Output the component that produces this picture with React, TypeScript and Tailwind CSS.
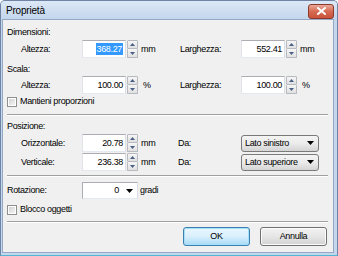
import React from "react";

function Up() {
  return (
    <svg width="5" height="3" viewBox="0 0 5 3">
      <path d="M0 3 L2.5 0 L5 3 Z" fill="#4a5f84" />
    </svg>
  );
}
function Down() {
  return (
    <svg width="5" height="3" viewBox="0 0 5 3">
      <path d="M0 0 L5 0 L2.5 3 Z" fill="#4a5f84" />
    </svg>
  );
}
function Caret() {
  return (
    <svg width="7" height="4" viewBox="0 0 7 4">
      <path d="M0 0 L7 0 L3.5 4 Z" fill="#000" />
    </svg>
  );
}

function NumField({ value, selected }: { value: string; selected?: boolean }) {
  return (
    <div className="flex h-[18px]">
      <div className="w-[44px] h-full bg-white border border-[#abadb3] border-r-[#dbdfe6] border-b-[#e3e9ef] border-l-[#e2e3ea] flex items-center justify-end pr-[2px]">
        {selected ? (
          <span className="bg-[#3399ff] text-white px-[1px] leading-[12px]">{value}</span>
        ) : (
          <span>{value}</span>
        )}
      </div>
      <div className="w-[11px] h-full flex flex-col ml-[1px]">
        <div className="h-[9px] border border-[#b7babf] rounded-[1px] bg-gradient-to-b from-[#f6f6f6] to-[#e0e0e0] flex items-center justify-center">
          <Up />
        </div>
        <div className="h-[9px] border border-[#b7babf] border-t-0 rounded-[1px] bg-gradient-to-b from-[#f6f6f6] to-[#e0e0e0] flex items-center justify-center">
          <Down />
        </div>
      </div>
    </div>
  );
}

function Dropdown({ text }: { text: string }) {
  return (
    <div className="w-[78px] h-[17px] rounded-[3px] border border-[#7a7a7a] bg-gradient-to-b from-[#f4f4f4] via-[#ebebeb] to-[#d4d4d4] flex items-center justify-between pl-[3px] pr-[4px]">
      <span>{text}</span>
      <Caret />
    </div>
  );
}

function Check({ label }: { label: string }) {
  return (
    <div className="flex items-center h-[11px] gap-[3px]">
      <div className="w-[10px] h-[10px] border border-[#8e8f8f] bg-white p-[1px]">
        <div className="w-full h-full bg-gradient-to-br from-[#d2d2d2] to-[#f4f4f4]" />
      </div>
      <span>{label}</span>
    </div>
  );
}

function Sep({ mt }: { mt: string }) {
  return <div className={`${mt} h-[2px] border-t border-t-[#a0a0a0] border-b border-b-white`} />;
}

export default function App() {
  return (
    <div className="w-[338px] h-[256px] overflow-hidden font-['Liberation_Sans',Arial,sans-serif] text-[9px] leading-[11px] tracking-[-0.35px] text-black">
      <div className="w-full h-full flex flex-col border border-[#6f84a3] border-b-[#4fb6d4] rounded-t-[5px] bg-[#c4d7ed]">
        <div className="h-[18px] shrink-0 flex items-center justify-between pl-[5px] pr-[3px] bg-gradient-to-b from-[#dce8f6] to-[#c3d6ec] rounded-t-[4px]">
          <span className="text-[10px] tracking-[-0.2px] pt-[1px]">Proprietà</span>
          <div className="w-[26px] h-[15px] mt-[2px] rounded-[3px] border border-[#8a3b2e] bg-gradient-to-b from-[#e9a898] via-[#d66a53] to-[#c9523a] flex items-center justify-center">
            <svg width="9" height="8" viewBox="0 0 9 8">
              <path d="M1 1 L8 7 M8 1 L1 7" stroke="#fff" strokeWidth="2" strokeLinecap="square" />
            </svg>
          </div>
        </div>
        <div className="flex-1 ml-[1px] mr-[3px] mb-[2px] bg-[#f0f0f0] border border-[#94a9c5] pl-[4px] pr-[5px] flex flex-col">
          <div className="mt-[7px] h-[11px]">Dimensioni:</div>
          <div className="mt-[2px] flex items-center h-[18px]">
            <div className="w-[75px] pl-[14px]">Altezza:</div>
            <NumField value="368.27" selected />
            <div className="w-[42px] pl-[3px]">mm</div>
            <div className="w-[61px]">Larghezza:</div>
            <NumField value="552.41" />
            <div className="pl-[3px]">mm</div>
          </div>
          <div className="mt-[6px] h-[11px]">Scala:</div>
          <div className="mt-[1px] flex items-center h-[18px]">
            <div className="w-[75px] pl-[14px]">Altezza:</div>
            <NumField value="100.00" />
            <div className="w-[42px] pl-[5px]">%</div>
            <div className="w-[61px]">Larghezza:</div>
            <NumField value="100.00" />
            <div className="pl-[5px]">%</div>
          </div>
          <div className="mt-[2px]">
            <Check label="Mantieni proporzioni" />
          </div>
          <Sep mt="mt-[7px]" />
          <div className="mt-[5px] h-[11px]">Posizione:</div>
          <div className="mt-[2px] flex items-center h-[18px]">
            <div className="w-[75px] pl-[14px]">Orizzontale:</div>
            <NumField value="20.78" />
            <div className="w-[40px] pl-[3px]">mm</div>
            <div className="w-[63px]">Da:</div>
            <Dropdown text="Lato sinistro" />
          </div>
          <div className="mt-[1px] flex items-center h-[18px]">
            <div className="w-[75px] pl-[14px]">Verticale:</div>
            <NumField value="236.38" />
            <div className="w-[40px] pl-[3px]">mm</div>
            <div className="w-[63px]">Da:</div>
            <Dropdown text="Lato superiore" />
          </div>
          <Sep mt="mt-[4px]" />
          <div className="mt-[5px] flex items-center h-[17px]">
            <div className="w-[75px]">Rotazione:</div>
            <div className="w-[56px] h-[17px] bg-white border border-[#abadb3] border-b-[#e3e9ef] border-r-[#dbdfe6] flex items-center justify-end pr-[4px] gap-[7px]">
              <span>0</span>
              <Caret />
            </div>
            <div className="pl-[2px]">gradi</div>
          </div>
          <div className="mt-[5px]">
            <Check label="Blocco oggetti" />
          </div>
          <Sep mt="mt-[6px]" />
          <div className="mt-[4px] flex justify-end gap-[10px] pr-[1px]">
            <div className="w-[67px] h-[19px] rounded-[3px] border border-[#3c7fb1] bg-gradient-to-b from-[#eaf6fd] via-[#d9f0fc] to-[#a7d9f5] flex items-center justify-center shadow-[inset_0_0_0_1px_#a4e0f8]">
              OK
            </div>
            <div className="w-[67px] h-[19px] rounded-[3px] border border-[#707070] bg-gradient-to-b from-[#f2f2f2] via-[#e6e6e6] to-[#d2d2d2] flex items-center justify-center shadow-[inset_0_0_0_1px_#fcfcfc]">
              Annulla
            </div>
          </div>
        </div>
      </div>
    </div>
  );
}
